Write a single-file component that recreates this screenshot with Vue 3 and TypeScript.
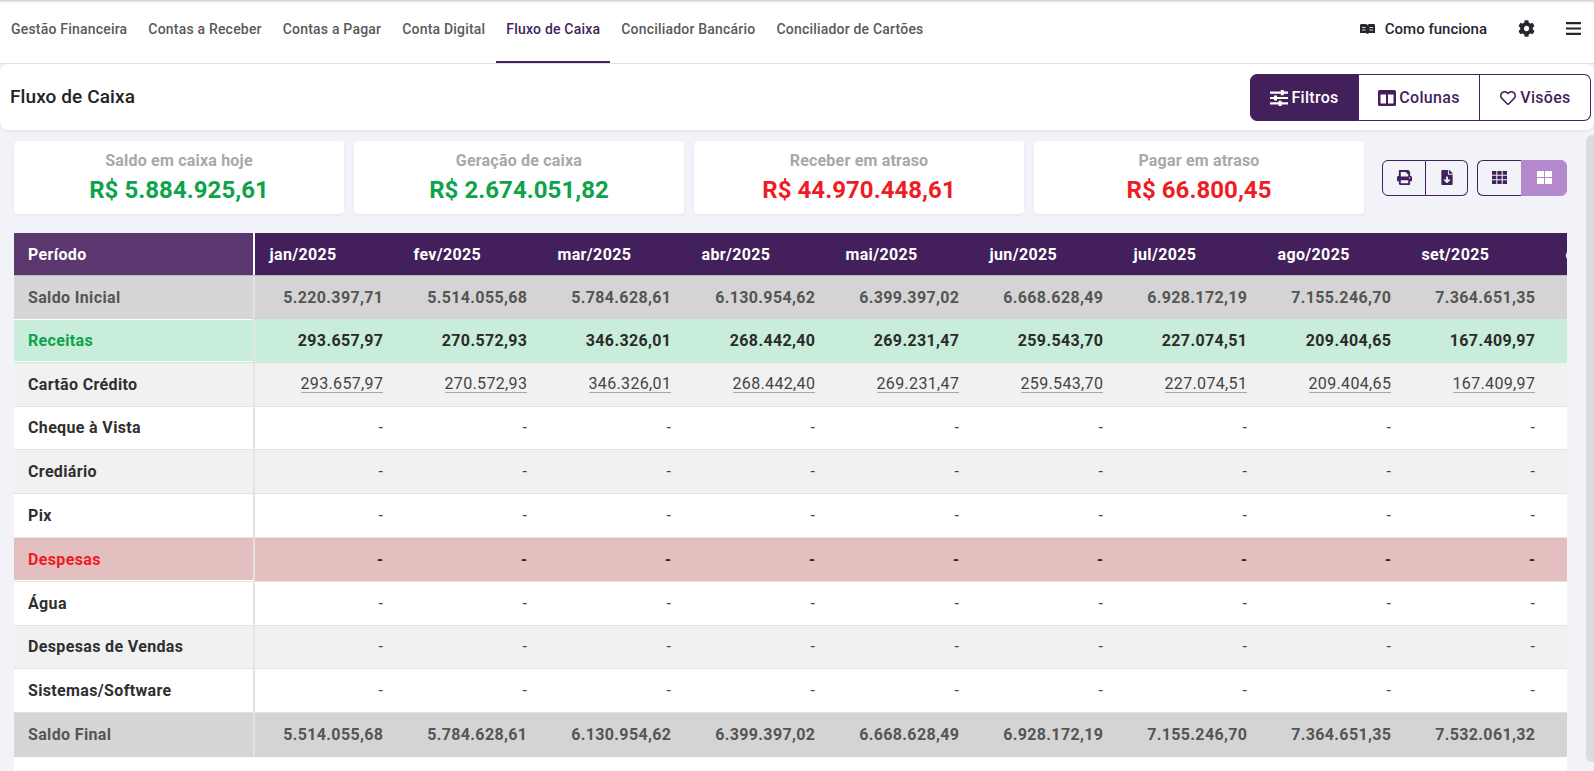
<script setup lang="ts">
interface Row {
  label: string
  kind: string
  values: string[]
}

const tabs: string[] = ['Gestão Financeira', 'Contas a Receber', 'Contas a Pagar', 'Conta Digital', 'Fluxo de Caixa', 'Conciliador Bancário', 'Conciliador de Cartões']
const cards = [
  { label: 'Saldo em caixa hoje', value: 'R$ 5.884.925,61', tone: 'pos' },
  { label: 'Geração de caixa', value: 'R$ 2.674.051,82', tone: 'pos' },
  { label: 'Receber em atraso', value: 'R$ 44.970.448,61', tone: 'neg' },
  { label: 'Pagar em atraso', value: 'R$ 66.800,45', tone: 'neg' },
]
const months: string[] = ['jan/2025', 'fev/2025', 'mar/2025', 'abr/2025', 'mai/2025', 'jun/2025', 'jul/2025', 'ago/2025', 'set/2025', 'out/2025']
const dashes: string[] = months.map(() => '-')
const receipts: string[] = ['293.657,97', '270.572,93', '346.326,01', '268.442,40', '269.231,47', '259.543,70', '227.074,51', '209.404,65', '167.409,97', '-']
const rows: Row[] = [
  { label: 'Saldo Inicial', kind: 'total opening', values: ['5.220.397,71', '5.514.055,68', '5.784.628,61', '6.130.954,62', '6.399.397,02', '6.668.628,49', '6.928.172,19', '7.155.246,70', '7.364.651,35', '7.532.061,32'] },
  { label: 'Receitas', kind: 'income', values: receipts },
  { label: 'Cartão Crédito', kind: 'even link', values: receipts },
  { label: 'Cheque à Vista', kind: 'odd', values: dashes },
  { label: 'Crediário', kind: 'even', values: dashes },
  { label: 'Pix', kind: 'odd', values: dashes },
  { label: 'Despesas', kind: 'expense', values: dashes },
  { label: 'Água', kind: 'odd', values: dashes },
  { label: 'Despesas de Vendas', kind: 'even', values: dashes },
  { label: 'Sistemas/Software', kind: 'odd', values: dashes },
  { label: 'Saldo Final', kind: 'total final', values: ['5.514.055,68', '5.784.628,61', '6.130.954,62', '6.399.397,02', '6.668.628,49', '6.928.172,19', '7.155.246,70', '7.364.651,35', '7.532.061,32', '-'] },
]
</script>

<template>
  <div class="app">
    <nav class="nav">
      <a v-for="tab in tabs" :key="tab" class="tab" :class="{ active: tab === 'Fluxo de Caixa' }">{{ tab }}</a>
      <div class="nav-right">
        <a class="how">
          <svg class="book" viewBox="0 0 15 10"><path fill="#26262e" d="M0 .8 1.200 0h4.800L7.500 1 9 0h4.800L15 .8V9H9L7.500 10 6 9H0z"/><path stroke="#d8d4c8" stroke-width="1" d="M2 3.500h3.500M2 6h3.500M9.500 3.500H13M9.500 6H13"/></svg>
          <span>Como funciona</span>
        </a>
        <svg class="gear" viewBox="0 0 512 512"><path fill="#26262e" d="M487.400 315.700l-42.600-24.600c4.300-23.200 4.300-47 0-70.200l42.600-24.600c4.900-2.800 7.100-8.600 5.500-14-11.100-35.600-30-67.800-54.700-94.600-3.800-4.100-10-5.100-14.800-2.300L380.800 110c-17.900-15.400-38.500-27.300-60.800-35.100V25.800c0-5.600-3.900-10.500-9.400-11.700-36.700-8.200-74.300-7.800-109.200 0-5.500 1.200-9.400 6.100-9.400 11.700V75c-22.200 7.900-42.800 19.800-60.800 35.100L88.700 85.500c-4.900-2.800-11-1.900-14.800 2.300-24.700 26.700-43.600 58.900-54.700 94.600-1.700 5.400.6 11.200 5.500 14L67.300 221c-4.300 23.200-4.300 47 0 70.200l-42.600 24.600c-4.900 2.800-7.100 8.600-5.500 14 11.100 35.600 30 67.800 54.700 94.600 3.800 4.100 10 5.100 14.800 2.300l42.600-24.600c17.900 15.400 38.500 27.300 60.800 35.100v49.200c0 5.600 3.900 10.500 9.400 11.700 36.700 8.200 74.300 7.800 109.200 0 5.500-1.200 9.400-6.100 9.400-11.700v-49.200c22.200-7.900 42.800-19.800 60.800-35.100l42.600 24.600c4.900 2.800 11 1.900 14.800-2.300 24.700-26.700 43.600-58.900 54.700-94.600 1.500-5.500-.7-11.300-5.600-14.100zM256 336c-44.100 0-80-35.900-80-80s35.900-80 80-80 80 35.900 80 80-35.900 80-80 80z"/></svg>
        <svg class="bars" viewBox="0 0 15 13"><path fill="#26262e" d="M0 0h15v2.200H0zM0 5.400h15v2.200H0zM0 10.800h15V13H0z"/></svg>
      </div>
    </nav>

    <header class="page-head">
      <h1 class="title">Fluxo de Caixa</h1>
      <div class="head-actions">
        <button class="head-btn on">
          <svg class="ico" viewBox="0 0 18 16"><path fill="#fff" d="M0 1.500h18v2.200H0zM0 6.900h18v2.200H0zM0 12.300h18v2.200H0z"/><path fill="#fff" d="M10.800 0h3v5.200h-3zM4 5.400h3v5.200H4zM8.600 10.800h3V16h-3z"/></svg>
          Filtros
        </button>
        <button class="head-btn">
          <svg class="ico" viewBox="0 0 18 16"><path fill="#431f5b" d="M1.500 0h15A1.500 1.500 0 0 1 18 1.500v13a1.500 1.500 0 0 1-1.500 1.500h-15A1.500 1.500 0 0 1 0 14.500v-13A1.500 1.500 0 0 1 1.500 0zM2.500 4.500v9h5.500v-9zm7.500 0v9h5.500v-9z"/></svg>
          Colunas
        </button>
        <button class="head-btn">
          <svg class="ico" viewBox="0 0 512 512"><path fill="#431f5b" d="M458.400 64.300C400.600 15.700 311.300 23 256 79.300 200.700 23 111.400 15.600 53.600 64.300-21.600 127.600-10.600 230.800 43 285.500l175.400 178.700c10 10.200 23.400 15.900 37.600 15.900 14.300 0 27.600-5.600 37.600-15.800L469 285.600c53.500-54.700 64.700-157.900-10.600-221.300zm-23.600 187.500L259.400 430.500c-2.400 2.400-4.400 2.400-6.800 0L77.200 251.800c-36.500-37.200-43.900-107.600 7.300-150.700 38.900-32.700 98.900-27.800 136.500 10.500l35 35.700 35-35.700c37.800-38.500 97.800-43.200 136.500-10.600 51.100 43.100 43.500 113.900 7.300 150.800z"/></svg>
          Visões
        </button>
      </div>
    </header>

    <main class="content">
      <section class="summary">
        <div class="cards">
          <div v-for="card in cards" :key="card.label" class="card">
            <div class="card-label">{{ card.label }}</div>
            <div class="card-value" :class="card.tone">{{ card.value }}</div>
          </div>
        </div>
        <div class="tools">
          <div class="group">
            <button class="tool print">
              <svg viewBox="0 0 512 512" width="15" height="15"><path fill="#431f5b" d="M448 192V77.250c0-8.490-3.370-16.620-9.370-22.630L393.370 9.370c-6-6-14.140-9.370-22.630-9.370H96C78.330 0 64 14.330 64 32v160c-35.350 0-64 28.650-64 64v112c0 8.840 7.160 16 16 16h48v96c0 17.670 14.330 32 32 32h320c17.670 0 32-14.330 32-32v-96h48c8.840 0 16-7.160 16-16V256c0-35.350-28.650-64-64-64zm-64 256H128v-96h256v96zm0-224H128V64h192v48c0 8.840 7.160 16 16 16h48v96zm48 72c-13.250 0-24-10.750-24-24 0-13.260 10.750-24 24-24s24 10.740 24 24c0 13.250-10.750 24-24 24z"/></svg>
            </button>
            <button class="tool file">
              <svg viewBox="0 0 384 512" width="12" height="15"><path fill="#431f5b" d="M224 136V0H24C10.700 0 0 10.700 0 24v464c0 13.300 10.700 24 24 24h336c13.300 0 24-10.700 24-24V160H248c-13.200 0-24-10.800-24-24zm76.450 211.360l-96.420 95.700c-6.650 6.610-17.390 6.610-24.040 0l-96.420-95.700C73.420 337.290 80.540 320 94.820 320H160v-80c0-8.840 7.160-16 16-16h32c8.840 0 16 7.160 16 16v80h65.180c14.280 0 21.400 17.290 11.270 27.360zM377 105L279.100 7c-4.500-4.500-10.600-7-17-7H256v128h128v-6.100c0-6.300-2.500-12.400-7-16.900z"/></svg>
            </button>
          </div>
          <div class="group">
            <button class="tool cells">
              <svg viewBox="0 0 15 13" width="15" height="13"><path fill="#431f5b" d="M0 0h4.300v3.700H0zM5.350 0h4.300v3.700h-4.300zM10.700 0H15v3.700h-4.300zM0 4.650h4.300v3.700H0zM5.350 4.650h4.300v3.700h-4.300zM10.700 4.650H15v3.700h-4.300zM0 9.300h4.300V13H0zM5.350 9.300h4.300V13h-4.300zM10.700 9.300H15V13h-4.300z"/></svg>
            </button>
            <button class="tool large">
              <svg viewBox="0 0 15 13" width="15" height="13"><path fill="#fff" d="M0 0h7v6H0zM8 0h7v6H8zM0 7h7v6H0zM8 7h7v6H8z"/></svg>
            </button>
          </div>
        </div>
      </section>

      <section class="sheet">
        <div class="line head">
          <div class="first">Período</div>
          <div v-for="m in months" :key="m" class="month">{{ m }}</div>
        </div>
        <div v-for="row in rows" :key="row.label" class="line" :class="row.kind">
          <div class="first">{{ row.label }}</div>
          <div v-for="(v, i) in row.values" :key="i" class="num"><span :class="{ dotted: v !== '-' }">{{ v }}</span></div>
        </div>
      </section>
    </main>

    <div class="scroll-thumb"></div>
  </div>
</template>

<style>
html, body { margin: 0; height: 100%; overflow: hidden; background: #f1f3f8; }
</style>

<style scoped>
.app { position: relative; height: 771px; overflow: hidden; font-family: Roboto, "Noto Sans", sans-serif; background: #f1f3f8; color: #2b2b2b; }
.nav { height: 63px; display: flex; align-items: stretch; gap: 1px; padding-left: 1px; background: #fff; border-bottom: 1px solid #e2e2e4; box-shadow: inset 0 3px 3px -2px rgba(0,0,0,.25); }
.tab { display: flex; align-items: center; padding: 0 10px 4px; font-size: 14px; font-weight: 500; color: #5a5a5a; letter-spacing: .2px; border-bottom: 2px solid transparent; white-space: nowrap; }
.tab.active { color: #431f5b; border-bottom-color: #431f5b; }
.nav-right { margin-left: auto; display: flex; align-items: center; padding: 0 13px 6px 0; }
.how { display: flex; align-items: center; gap: 10px; font-size: 15px; font-weight: 500; color: #26262e; }
.book { width: 15px; height: 10px; }
.gear { width: 17px; height: 17px; margin-left: 31px; }
.bars { width: 15px; height: 13px; margin-left: 31px; }
.page-head { height: 66px; display: flex; align-items: center; justify-content: space-between; padding: 0 3px 0 10px; background: #fff; border-radius: 8px; box-shadow: 0 1px 3px rgba(0,0,0,.08); position: relative; }
.title { margin: -2px 0 0; font-size: 19px; font-weight: 500; color: #222; letter-spacing: .1px; }
.head-actions { display: flex; height: 47px; margin-top: 1px; }
.head-btn { display: flex; align-items: center; justify-content: center; gap: 3px; font: 500 16px Roboto, sans-serif; letter-spacing: .3px; color: #431f5b; background: #fff; border: 1px solid #431f5b; border-left: 0; padding: 0; cursor: pointer; }
.head-btn:nth-child(1) { width: 109px; background: #431f5b; color: #fff; border-radius: 7px 0 0 7px; border-left: 1px solid #431f5b; }
.head-btn:nth-child(2) { width: 121px; }
.head-btn:nth-child(3) { width: 111px; border-radius: 0 7px 7px 0; }
.ico { width: 18px; height: 16px; }
.content { padding: 11px 27px 0 14px; }
.summary { display: flex; align-items: center; }
.cards { width: 1351px; display: grid; grid-template-columns: repeat(4, 1fr); gap: 10px; }
.card { height: 73px; background: #fff; border-radius: 4px; box-shadow: 0 1px 3px rgba(0,0,0,.06); text-align: center; box-sizing: border-box; padding-top: 10px; }
.card-label { font-size: 16px; font-weight: 700; color: #a8a8a8; line-height: 20px; letter-spacing: .2px; }
.card-value { font-size: 24px; font-weight: 700; line-height: 32px; margin-top: 3px; letter-spacing: .05px; }
.pos { color: #0ca34b; }
.neg { color: #ee1c25; }
.tools { display: flex; gap: 9px; margin-left: 18px; }
.group { display: flex; height: 36px; }
.tool { display: flex; align-items: center; justify-content: center; padding: 0; background: transparent; border: 1px solid #431f5b; cursor: pointer; }
.print { width: 44px; border-radius: 6px 0 0 6px; }
.file { width: 42px; border-left: 0; border-radius: 0 6px 6px 0; }
.cells { width: 44px; border-right: 0; border-radius: 6px 0 0 6px; }
.large { width: 46px; background: #b388cd; border-color: #b388cd; border-radius: 0 6px 6px 0; }
.sheet { margin-top: 19px; background: #fff; overflow: hidden; height: 540px; }
.line { display: grid; grid-template-columns: 241px repeat(10, 144px); height: 43.8px; font-size: 16px; letter-spacing: .35px; box-sizing: border-box; border-bottom: 1px solid #e3e3e3; background: #fff; align-items: stretch; }
.line > div { display: flex; align-items: center; box-sizing: border-box; white-space: nowrap; }
.first { padding-left: 14px; font-weight: 700; border-right: 2px solid #e3e3e3; color: #2f2f2f; }
.num { justify-content: flex-end; padding-right: 15.7px; color: #444; }
.head { height: 43px; background: #431f5b; border-bottom: 1px solid #bbb; }
.head .first { background: #5c376f; color: #fff; border-right: 2px solid #fff; }
.month { padding-left: 14.5px; font-weight: 700; color: #fff; }
.even { background: #f1f1f1; }
.opening { height: 43px; }
.final { height: 44px; }
.total { background: #d4d4d4; border-bottom-color: #d4d4d4; }
.total .first { background: #d6d6d6; color: #555; }
.total .num { font-weight: 700; color: #555; }
.income { background: #c8edda; border-bottom-color: #c8edda; }
.income .first { color: #0ca34b; box-shadow: inset 0 1px 0 #fff, inset 0 -1px 0 #fff; }
.income .num { font-weight: 700; color: #2b2b2b; }
.expense { background: #e4bfbf; }
.expense .first { color: #ee1c25; box-shadow: inset 0 -1px 0 #fff; }
.expense .num { font-weight: 700; color: #2b2b2b; }
.link .dotted { border-bottom: 1px solid #a8a8a8; line-height: 17px; }
.scroll-thumb { position: absolute; left: 1586px; top: 135px; width: 8px; height: 627px; background: #dcdce0; border-radius: 6px 0 0 6px; }
</style>
